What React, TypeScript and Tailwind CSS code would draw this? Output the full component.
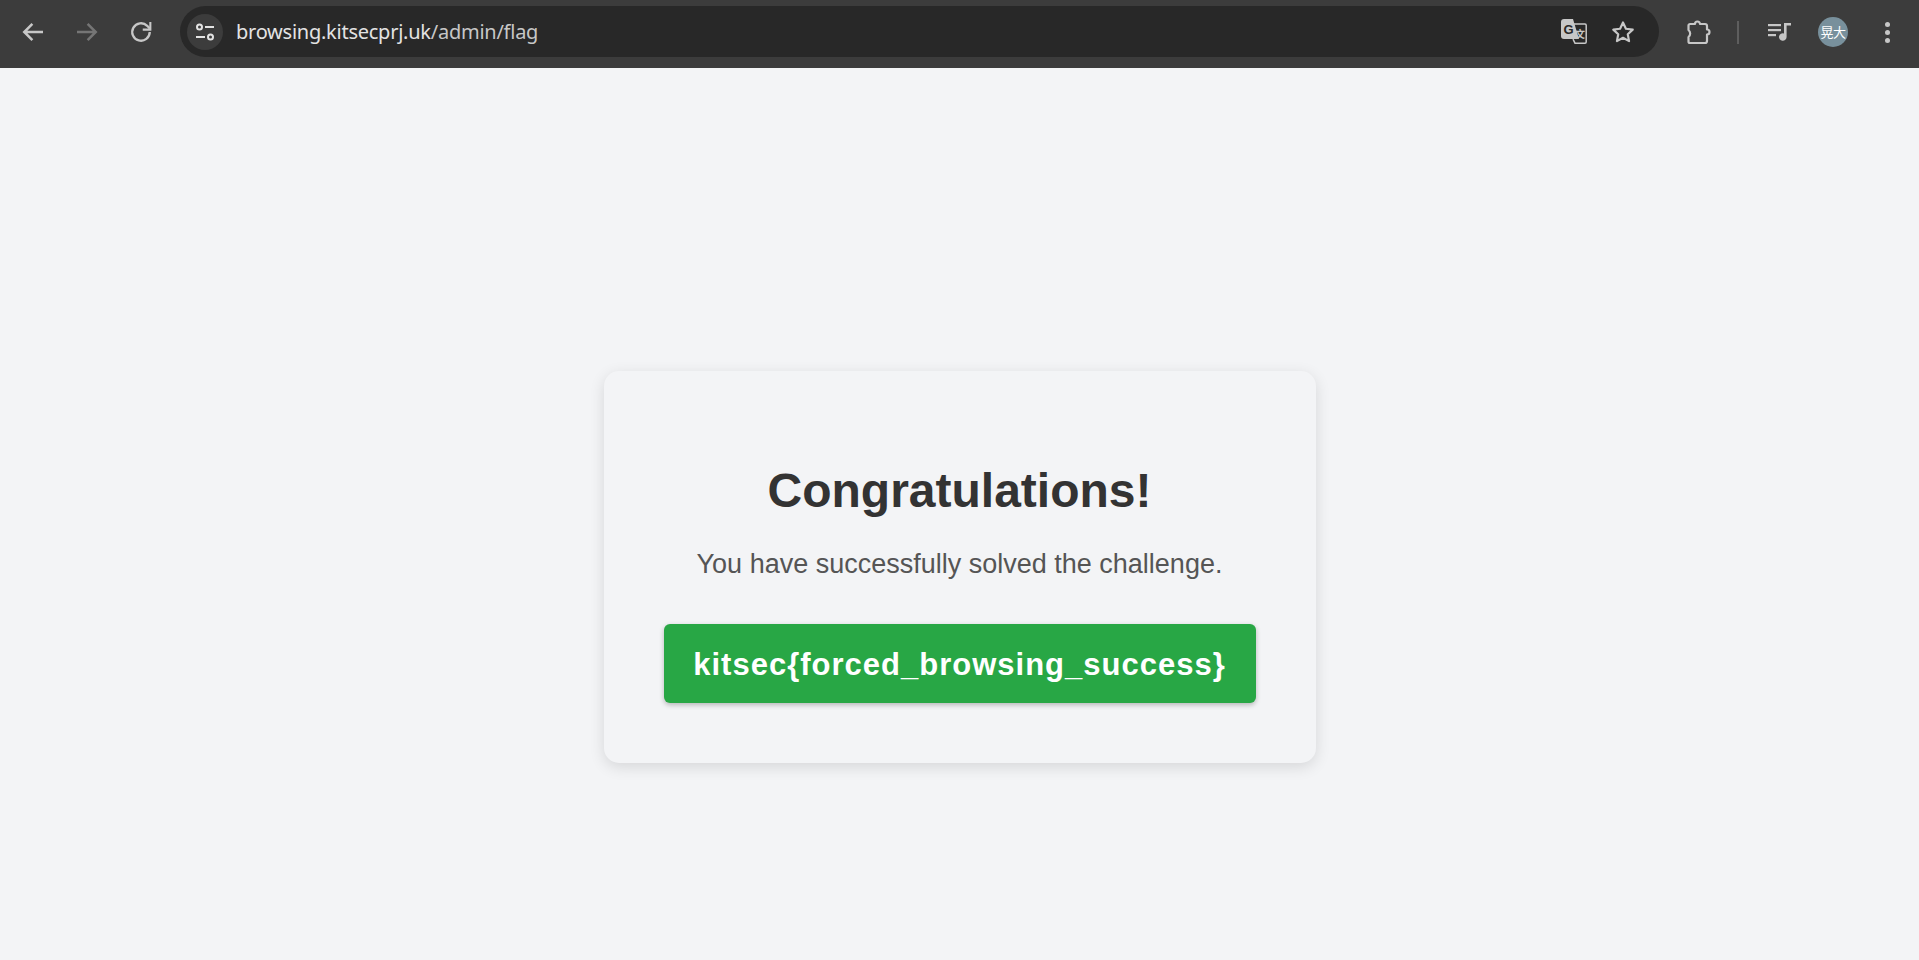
import React from 'react';

const ToolIcon: React.FC<{ children: React.ReactNode; className?: string; box?: string }> = ({ children, className, box = '0 0 24 24' }) => (
  <svg viewBox={box} fill="none" stroke="currentColor" strokeWidth="2" className={className}>
    {children}
  </svg>
);

const Toolbar: React.FC = () => {
  return (
    <header className="h-[68px] bg-[#3c3c3c] flex items-start text-[#c7c7c7]">
      <div className="flex items-center w-[180px] h-[64px] pl-[18px] gap-[24px]">
        <ToolIcon className="w-[30px] h-[30px]">
          <path d="M20 12H5M11.5 5.500 5 12l6.500 6.500" />
        </ToolIcon>
        <ToolIcon className="w-[30px] h-[30px] text-[#757575]">
          <path d="M4 12h15M12.500 5.500 19 12l-6.500 6.500" />
        </ToolIcon>
        <ToolIcon className="w-[28px] h-[28px] ml-[1px]">
          <path d="M19.500 12a7.500 7.500 0 1 1-2.200-5.300L19.500 9" />
          <path d="M20 3.500V10h-6.500" strokeWidth="1.800" />
        </ToolIcon>
      </div>

      <div className="mt-[6px] h-[51px] w-[1479px] rounded-full bg-[#282828] flex items-center pl-[7px] pr-[23px]">
        <div className="w-[36px] h-[36px] rounded-full bg-[#3c3c3c] flex items-center justify-center text-[#e3e3e3]">
          <ToolIcon className="w-[24px] h-[24px]">
            <circle cx="6.500" cy="7" r="2.500" />
            <path d="M12 7h9M3 17h9" />
            <circle cx="17.500" cy="17" r="2.500" />
          </ToolIcon>
        </div>
        <div className="ml-[13px] flex-1 text-[20px] font-['Noto_Sans',sans-serif] text-[#e3e3e3] tracking-[-0.25px]">
          browsing.kitsecprj.uk<span className="text-[#c7c7c7]">/admin/flag</span>
        </div>
        <svg viewBox="0 0 26 25" className="w-[26px] h-[25px] mr-[23px]">
          <path d="M12 5h12a1.200 1.200 0 0 1 1.200 1.200V23a1.200 1.200 0 0 1-1.200 1.200H14l-2-4" fill="#282828" stroke="#c7c7c7" strokeWidth="1.500" />
          <path d="M3 0h9l6 20H3a3 3 0 0 1-3-3V3a3 3 0 0 1 3-3Z" fill="#c7c7c7" />
          <text x="2.500" y="14.500" fontSize="13" fontWeight="700" fontFamily="Liberation Sans, sans-serif" fill="#282828">G</text>
          <text x="14" y="19" fontSize="10" fontWeight="700" fontFamily="Noto Sans CJK SC, sans-serif" fill="#c7c7c7">文</text>
        </svg>
        <ToolIcon className="w-[26px] h-[26px]">
          <path d="M12 3.200l2.700 5.800 6.300.8-4.600 4.300 1.200 6.300L12 17.300l-5.600 3.100 1.200-6.300L3 9.800l6.300-.8Z" strokeLinejoin="round" />
        </ToolIcon>
      </div>

      <div className="h-[64px] flex items-center pl-[28px]">
        <svg viewBox="0 0 25 25" fill="none" stroke="currentColor" strokeWidth="2.200" className="w-[25px] h-[25px]">
          <path d="M1.500 5.500a1.500 1.500 0 0 1 1.500-1.500H8a2.500 2.500 0 0 1 5 0H18a2 2 0 0 1 2 2V9.500a2.500 2.500 0 0 1 0 5V21a2 2 0 0 1-2 2H3a1.500 1.500 0 0 1-1.500-1.500V17a4.500 4.500 0 0 0 0-7Z" strokeLinejoin="round" />
        </svg>
        <div className="ml-[25px] w-[2px] h-[23px] bg-[#5e5e5e]" />
        <svg viewBox="0 0 24 18" fill="currentColor" className="ml-[29px] w-[24px] h-[18px]">
          <rect x="0" y="1" width="13" height="2.200" />
          <rect x="0" y="6" width="13" height="2.200" />
          <rect x="0" y="11" width="8" height="2.200" />
          <path d="M16 0h7v2.600h-4.400V14a3.800 3.800 0 1 1-2.600-3.600Z" />
        </svg>
        <div className="ml-[26px] w-[30px] h-[30px] rounded-full bg-[#78909c] flex items-center justify-center text-[13px] text-white font-['Noto_Sans_CJK_JP',sans-serif] tracking-[-0.5px]">
          晃大
        </div>
        <div className="ml-[37px] flex flex-col gap-[3px]">
          <span className="w-[5px] h-[5px] rounded-full bg-[#c7c7c7]" />
          <span className="w-[5px] h-[5px] rounded-full bg-[#c7c7c7]" />
          <span className="w-[5px] h-[5px] rounded-full bg-[#c7c7c7]" />
        </div>
      </div>
    </header>
  );
};

export default function App() {
  return (
    <div className="h-[960px] overflow-hidden bg-[#f3f4f6] font-['Liberation_Sans',Arial,sans-serif]">
      <Toolbar />
      <main className="flex justify-center pt-[303px]">
        <div className="w-[712px] h-[392px] p-[60px] rounded-[15px] bg-[#f3f4f6] shadow-[0_4px_15px_rgba(0,0,0,0.12)] text-center">
          <h1 className="text-[48px] leading-[55px] font-bold text-[#333] mt-[32px]">Congratulations!</h1>
          <p className="text-[27px] leading-[32px] text-[#555] mt-[30px]">You have successfully solved the challenge.</p>
          <div className="mt-[44px] h-[79px] pt-[3px] rounded-[6px] bg-[#28a745] shadow-[0_2px_5px_rgba(0,0,0,0.25)] flex items-center justify-center text-[31px] font-bold text-white tracking-[1px]">
            kitsec{'{'}forced_browsing_success{'}'}
          </div>
        </div>
      </main>
    </div>
  );
}
